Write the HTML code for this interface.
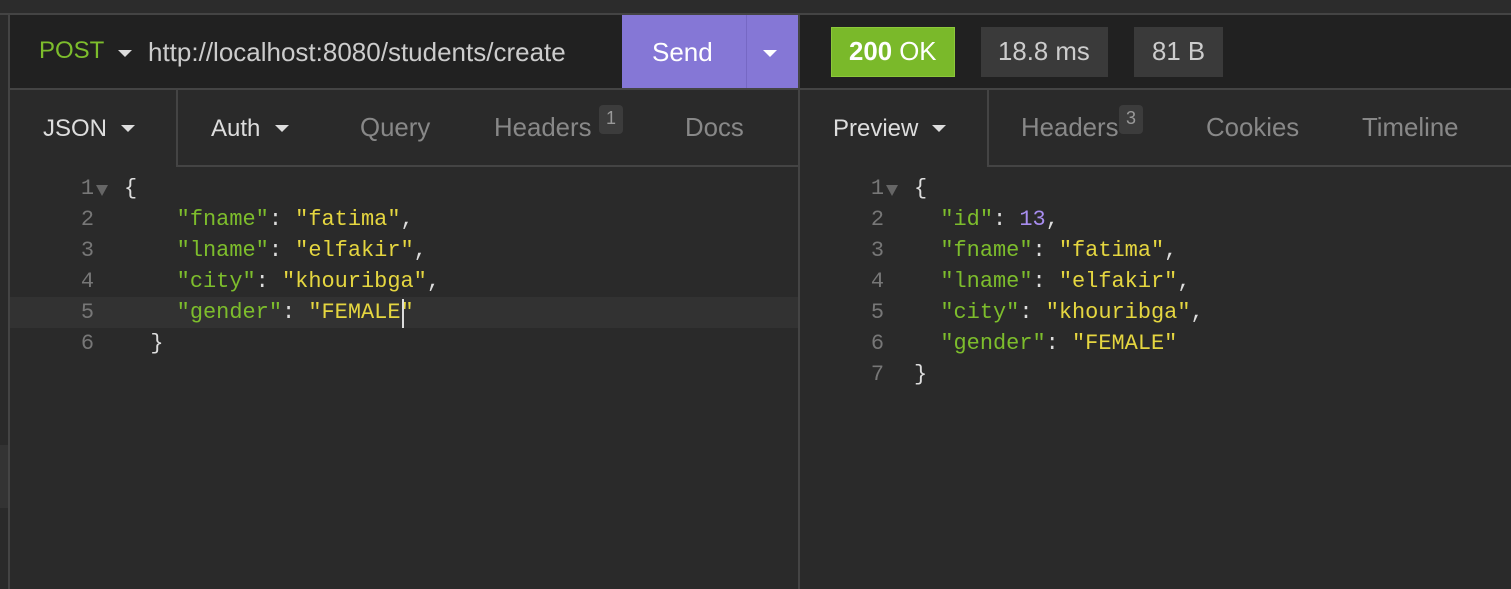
<!DOCTYPE html>
<html><head><style>
*{margin:0;padding:0;box-sizing:border-box}
body{width:1511px;height:589px;background:#2a2a2a;font-family:"Liberation Sans",sans-serif;position:relative;overflow:hidden}
.a{position:absolute}
.t{font-size:25.8px;white-space:nowrap;line-height:1}
.w{font-size:24px}
.tri{display:inline-block;width:0;height:0;border-left:7px solid transparent;border-right:7px solid transparent;border-top:7px solid #ddd;vertical-align:middle}
.code{font-family:"Liberation Mono",monospace;font-size:21.95px;white-space:pre;line-height:31px}
.k{color:#7dbd2c}.s{color:#e5d640}.p{color:#ddd}.n{color:#a88df0}
.ln{color:#777;text-align:right;width:30px}
</style></head><body>
<div class="a" style="left:0;top:0;width:1511px;height:13px;background:#2c2c2c"></div>
<div class="a" style="left:0;top:13px;width:1511px;height:2px;background:#444"></div>
<div class="a" style="left:8px;top:15px;width:2px;height:574px;background:#444"></div>
<div class="a" style="left:0;top:445px;width:8px;height:63px;background:#333"></div>
<!-- left header -->
<div class="a" style="left:10px;top:15px;width:788px;height:73px;background:#212121"></div>
<div class="a t" style="left:39px;top:39px;color:#7dbd2c;font-size:24px">POST</div>
<div class="a" style="left:118px;top:45px"><span class="tri"></span></div>
<div class="a t" style="left:148px;top:39px;color:#ccc;font-size:26px">http://localhost:8080/students/create</div>
<div class="a" style="left:622px;top:15px;width:176px;height:73px;background:#8577d6"></div>
<div class="a" style="left:746px;top:15px;width:1px;height:73px;background:#7668c4"></div>
<div class="a t" style="left:652px;top:39px;color:#fff;font-size:26px">Send</div>
<div class="a" style="left:763px;top:45px"><span class="tri" style="border-top-color:#fff"></span></div>
<div class="a" style="left:10px;top:88px;width:788px;height:2px;background:#444"></div>
<!-- left tabs -->
<div class="a" style="left:176px;top:90px;width:2px;height:76px;background:#444"></div>
<div class="a" style="left:176px;top:165px;width:622px;height:2px;background:#444"></div>
<div class="a t w" style="left:43px;top:117px;color:#ddd">JSON</div>
<div class="a" style="left:121px;top:120px"><span class="tri"></span></div>
<div class="a t w" style="left:211px;top:117px;color:#ddd">Auth</div>
<div class="a" style="left:275px;top:120px"><span class="tri"></span></div>
<div class="a t" style="left:360px;top:116px;color:#888">Query</div>
<div class="a t" style="left:494px;top:116px;color:#888">Headers</div>
<div class="a" style="left:599px;top:105px;width:24px;height:29px;background:#3c3c3c;border-radius:4px;color:#999;font-size:18px;text-align:center;line-height:26px">1</div>
<div class="a t" style="left:685px;top:116px;color:#888">Docs</div>
<!-- divider -->
<div class="a" style="left:798px;top:15px;width:2px;height:574px;background:#444"></div>
<!-- right header -->
<div class="a" style="left:800px;top:15px;width:711px;height:73px;background:#212121"></div>
<div class="a" style="left:831px;top:27px;width:124px;height:50px;background:#7ab92a;border:1px solid #8cc83a"></div>
<div class="a t" style="left:849px;top:40px;color:#fff"><b>200</b> OK</div>
<div class="a" style="left:981px;top:27px;width:127px;height:50px;background:#3a3a3a"></div>
<div class="a t" style="left:998px;top:40px;color:#ccc">18.8 ms</div>
<div class="a" style="left:1134px;top:27px;width:89px;height:50px;background:#3a3a3a"></div>
<div class="a t" style="left:1152px;top:40px;color:#ccc">81 B</div>
<div class="a" style="left:800px;top:88px;width:711px;height:2px;background:#444"></div>
<div class="a" style="left:987px;top:90px;width:2px;height:76px;background:#444"></div>
<div class="a" style="left:987px;top:165px;width:524px;height:2px;background:#444"></div>
<div class="a t w" style="left:833px;top:117px;color:#ddd">Preview</div>
<div class="a" style="left:932px;top:120px"><span class="tri"></span></div>
<div class="a t" style="left:1021px;top:116px;color:#888">Headers</div>
<div class="a" style="left:1119px;top:105px;width:24px;height:29px;background:#3c3c3c;border-radius:4px;color:#999;font-size:18px;text-align:center;line-height:26px">3</div>
<div class="a t" style="left:1206px;top:116px;color:#888">Cookies</div>
<div class="a t" style="left:1362px;top:116px;color:#888">Timeline</div>
<!-- left code -->
<div class="a" style="left:10px;top:297px;width:788px;height:31px;background:#323232"></div>
<div class="a code ln" style="left:64px;top:173px">1
2
3
4
5
6</div>
<div class="a" style="left:96px;top:185px;width:0;height:0;border-left:6px solid transparent;border-right:6px solid transparent;border-top:11px solid #666"></div>
<div class="a code p" style="left:124px;top:173px">{
    <span class="k">"fname"</span>: <span class="s">"fatima"</span>,
    <span class="k">"lname"</span>: <span class="s">"elfakir"</span>,
    <span class="k">"city"</span>: <span class="s">"khouribga"</span>,
    <span class="k">"gender"</span>: <span class="s">"FEMALE"</span>
  }</div>
<div class="a" style="left:402px;top:299px;width:2px;height:29px;background:#ddd"></div>
<!-- right code -->
<div class="a code ln" style="left:854px;top:173px">1
2
3
4
5
6
7</div>
<div class="a" style="left:886px;top:185px;width:0;height:0;border-left:6px solid transparent;border-right:6px solid transparent;border-top:11px solid #666"></div>
<div class="a code p" style="left:914px;top:173px">{
  <span class="k">"id"</span>: <span class="n">13</span>,
  <span class="k">"fname"</span>: <span class="s">"fatima"</span>,
  <span class="k">"lname"</span>: <span class="s">"elfakir"</span>,
  <span class="k">"city"</span>: <span class="s">"khouribga"</span>,
  <span class="k">"gender"</span>: <span class="s">"FEMALE"</span>
}</div>
</body></html>
